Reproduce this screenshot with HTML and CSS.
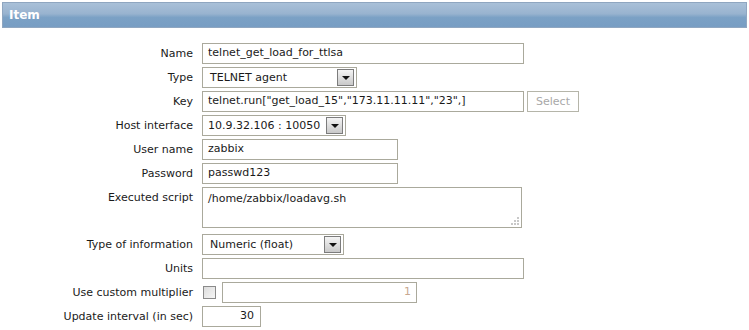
FILE: index.html
```html
<!DOCTYPE html>
<html lang="en">
<head>
    <meta charset="UTF-8">
    <title>Item</title>
    <link rel="stylesheet" href="styles.css">
</head>
<body>
    <div class="header">Item</div>

    <div class="form">
        <div class="label">Name</div>
        <div class="field"><div class="input wide">telnet_get_load_for_ttlsa</div></div>

        <div class="label">Type</div>
        <div class="field">
            <div class="select type-select"><span>TELNET agent</span><span class="arrow"></span></div>
        </div>

        <div class="label">Key</div>
        <div class="field">
            <div class="input wide">telnet.run["get_load_15","173.11.11.11","23",]</div>
            <div class="button disabled">Select</div>
        </div>

        <div class="label">Host interface</div>
        <div class="field">
            <div class="select host-select"><span>10.9.32.106 : 10050</span><span class="arrow"></span></div>
        </div>

        <div class="label">User name</div>
        <div class="field"><div class="input medium">zabbix</div></div>

        <div class="label">Password</div>
        <div class="field"><div class="input medium">passwd123</div></div>

        <div class="label top">Executed script</div>
        <div class="field tall">
            <div class="textarea">/home/zabbix/loadavg.sh
                <svg class="grip" width="8" height="8" viewBox="0 0 8 8">
                    <rect x="6" y="0" width="2" height="2" fill="#c8c8c8"/>
                    <rect x="3" y="3" width="2" height="2" fill="#c8c8c8"/>
                    <rect x="6" y="3" width="2" height="2" fill="#c8c8c8"/>
                    <rect x="0" y="6" width="2" height="2" fill="#c8c8c8"/>
                    <rect x="3" y="6" width="2" height="2" fill="#c8c8c8"/>
                    <rect x="6" y="6" width="2" height="2" fill="#c8c8c8"/>
                </svg>
            </div>
        </div>

        <div class="label">Type of information</div>
        <div class="field">
            <div class="select info-select"><span>Numeric (float)</span><span class="arrow"></span></div>
        </div>

        <div class="label">Units</div>
        <div class="field"><div class="input wide"></div></div>

        <div class="label">Use custom multiplier</div>
        <div class="field">
            <div class="checkbox"></div>
            <div class="input multiplier">1</div>
        </div>

        <div class="label">Update interval (in sec)</div>
        <div class="field"><div class="input short">30</div></div>
    </div>
</body>
</html>
```

FILE: styles.css
```css
body {
    margin: 0;
    padding: 2px;
    font-family: "DejaVu Sans", Verdana, sans-serif;
    font-size: 11px;
    color: #1a1a1a;
    background: #fff;
}
.header {
    height: 24px;
    line-height: 24px;
    padding-left: 6px;
    border: 1px solid #8fa6c0;
    background: linear-gradient(to bottom, #a9c0d8 0%, #98b3cf 45%, #7ba1c5 60%, #779dc3 100%);
    color: #fff;
    font-weight: bold;
    font-size: 12px;
}
.form {
    display: grid;
    grid-template-columns: 191px 1fr;
    column-gap: 9px;
    margin-top: 15px;
}
.label {
    height: 24px;
    line-height: 22px;
    text-align: right;
}
.label.top {
    line-height: 22px;
}
.field {
    height: 24px;
    display: flex;
    align-items: flex-start;
}
.field.tall {
    height: 47px;
}
.input {
    box-sizing: border-box;
    height: 21px;
    line-height: 18px;
    padding: 0 5px;
    border: 1px solid #aaa99c;
    background: #fff;
    white-space: nowrap;
    overflow: hidden;
}
.wide {
    width: 322px;
}
.medium {
    width: 196px;
}
.short {
    width: 59px;
    text-align: right;
    padding-right: 6px;
}
.multiplier {
    width: 195px;
    margin-left: 5px;
    text-align: right;
    color: #c8a890;
}
.select {
    box-sizing: border-box;
    height: 21px;
    display: flex;
    align-items: center;
    justify-content: space-between;
    border: 1px solid #aaa99c;
    background: #fff;
    padding-left: 7px;
    padding-right: 2px;
}
.type-select {
    width: 155px;
}
.host-select {
    width: 144px;
    padding-left: 5px;
}
.info-select {
    width: 142px;
}
.arrow {
    width: 15px;
    height: 15px;
    border: 1px solid #7c7c7c;
    background: linear-gradient(to bottom, #f4f4f4, #c9c9c9);
    position: relative;
}
.arrow::after {
    content: "";
    position: absolute;
    left: 4px;
    top: 6px;
    border-left: 4px solid transparent;
    border-right: 4px solid transparent;
    border-top: 4px solid #111;
}
.button {
    box-sizing: border-box;
    width: 52px;
    height: 21px;
    line-height: 19px;
    margin-left: 3px;
    text-align: center;
    border: 1px solid #b5b5a9;
    background: #fff;
}
.button.disabled {
    color: #a8a8a8;
}
.textarea {
    position: relative;
    box-sizing: border-box;
    width: 320px;
    height: 41px;
    padding: 4px 5px;
    border: 1px solid #aaa99c;
    background: #fff;
}
.grip {
    position: absolute;
    right: 2px;
    bottom: 2px;
}
.checkbox {
    box-sizing: border-box;
    width: 13px;
    height: 13px;
    margin: 4px 1px 0 1px;
    border: 1px solid #8a8a8a;
    background: linear-gradient(to bottom right, #dcdcdc, #f6f6f6);
}
```
